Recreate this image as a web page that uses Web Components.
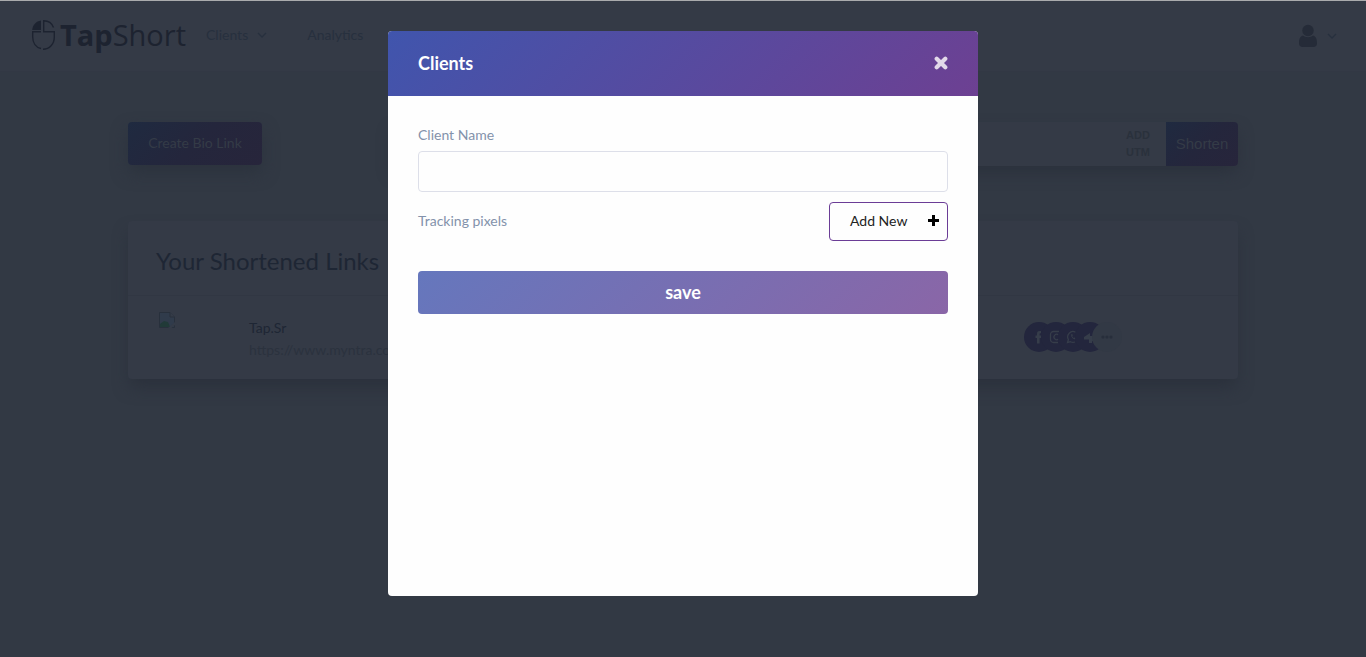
<!DOCTYPE html>
<html lang="en">
<head>
<meta charset="utf-8">
<title>TapShort</title>
<style>
  html { height: 100%; background: #323944; }
  body { margin: 0; min-height: 100%; font-family: Lato, "Liberation Sans", sans-serif; font-size: 14px; line-height: 20px; }
</style>
</head>
<body>
<tap-app></tap-app>

<script>
const define = (name, html, setup) => {
  const template = document.createElement('template');
  template.innerHTML = `<style>*{box-sizing:border-box} a{color:inherit;text-decoration:none} button,input{font:inherit;margin:0} button{cursor:pointer}</style>${html}`;
  customElements.define(name, class extends HTMLElement {
    constructor() {
      super();
      this.attachShadow({ mode: 'open' }).append(template.content.cloneNode(true));
      if (setup) setup(this, this.shadowRoot);
    }
  });
};

define('tap-chevron', `
<style>
  :host { display: block; width: 10px; height: 10px; }
  svg { display: block; }
</style>
<svg width="10" height="10" viewBox="0 0 10 10" fill="none" stroke="currentColor" stroke-width="1.3"><path d="M1 3l4 4 4-4"/></svg>`);

define('tap-logo', `
<style>
  :host { display: block; color: #1d2330; }
  a { display: flex; align-items: center; gap: 4px; font: 29px/40px "Open Sans", "Noto Sans", sans-serif; }
  svg { display: block; flex: none; }
  b { font-weight: 700; }
</style>
<a href="#"><svg width="25" height="32" viewBox="0 0 25 32" fill="none" stroke="currentColor" stroke-width="1.4">
  <path d="M10 1.500V11H1.200C1.600 6 5 2.300 10 1.500Z" fill="currentColor" stroke="none"/>
  <path d="M22.500 8.500C21 4.300 17 1.700 12.700 1.700V12.700H23.300V18C23.300 25 18.500 30.300 12 30.300M10 29.500C5 28.500 1.700 24 1.700 18V12.700H10"/>
</svg><span><b>Tap</b>Short</span></a>`);

define('tap-header', `
<style>
  :host { display: block; border-top: 1px solid #aaabad; }
  header { display: flex; align-items: center; height: 71px; padding: 0 29px 2px 31px; background: #343a46; border-bottom: 1px solid #323844; color: #27303e; }
  nav { display: flex; gap: 40px; margin-left: 20px; }
  nav a { display: flex; align-items: center; gap: 9px; }
  button { display: flex; align-items: center; gap: 9px; margin-left: auto; padding: 2px 0 0; border: 0; background: none; color: #27303e; }
</style>
<header>
  <tap-logo></tap-logo>
  <nav><a href="#">Clients <tap-chevron></tap-chevron></a><a href="#">Analytics</a></nav>
  <button aria-label="Account">
    <svg width="20" height="24" viewBox="0 0 20 24" fill="#252b38"><circle cx="10" cy="6.500" r="5.700"/><path d="M5 11.500C1.500 12.500 1 16 1 19.500 1 21.500 2.500 23 4.500 23h11c2 0 3.500-1.500 3.500-3.500 0-3.500-.5-7-4-8-2.500 2.300-7.500 2.300-10 0z"/></svg>
    <tap-chevron></tap-chevron>
  </button>
</header>`);

define('tap-toolbar', `
<style>
  :host { display: flex; align-items: flex-start; gap: 130px; }
  button { border: 0; background: linear-gradient(135deg, #1f2a40, #24263c 50%, #27253b); color: #343b47; }
  .bio { width: 134px; height: 43px; border-radius: 4px; box-shadow: 0 8px 16px #2c333e; white-space: nowrap; padding: 0 0 2px; }
  .shell { flex: 1; border-radius: 4px; box-shadow: 0 8px 16px -2px #2b313c; display: flex; }
  form { display: flex; flex: 1; height: 44px; border-radius: 4px; overflow: hidden; background: #343a46; }
  input { flex: 1; min-width: 0; border: 0; background: none; color: #27303e; outline: 0; }
  a { width: 28px; margin-right: 12px; align-self: center; color: #2a313c; font: bold 11px/17px "Liberation Sans", Arial, sans-serif; }
  .go { width: 72px; padding: 0; font: 15px/20px "Liberation Sans", Arial, sans-serif; }
</style>
<button class="bio">Create Bio Link</button>
<div class="shell"><form>
  <input aria-label="Link to shorten" type="url">
  <a href="#">ADD UTM</a>
  <button class="go" type="button">Shorten</button>
</form></div>`);

define('tap-social', `
<style>
  :host { display: flex; }
  a { display: flex; align-items: center; justify-content: center; width: 30px; height: 30px; border-radius: 50%; background: #23263d; color: #363d4a; }
  a + a { margin-left: -13px; }
  .more { background: #323945; color: #272e3b; }
</style>
<a href="#" aria-label="Facebook"><svg width="14" height="14" viewBox="0 0 14 14" fill="currentColor"><path d="M9 1H7.500C5.500 1 5 2.300 5 4v1.500H3.500V8H5v5.500h2.600V8h1.700l.3-2.500h-2V4.200c0-.7.300-1 1-1H9z"/></svg></a>
<a href="#" aria-label="Instagram"><svg width="14" height="14" viewBox="0 0 14 14" fill="none" stroke="currentColor" stroke-width="1.300"><path d="M10 1.500H4.500a3 3 0 0 0-3 3v5a3 3 0 0 0 3 3H9M9.500 5A2.700 2.700 0 1 0 9.500 9"/></svg></a>
<a href="#" aria-label="WhatsApp"><svg width="14" height="14" viewBox="0 0 14 14" fill="none" stroke="currentColor" stroke-width="1.300"><path d="M9.500 2.200A5.300 5.300 0 0 0 2.400 9.500l-.9 3 3-.8c1.500.9 3 .9 4.500.3"/><path d="M5 4.500c0 3 2 4.800 4.500 5l.6-1.200-1.600-.9-.7.600C7 7.500 6.500 7 6.200 6.200l.6-.7L6.200 4z" fill="currentColor" stroke="none"/></svg></a>
<a href="#" aria-label="Share"><svg width="14" height="14" viewBox="0 0 14 14" fill="currentColor"><path d="M1 7l6-4v3h5v5H9v2H6v-3.500H1z"/></svg></a>
<a class="more" href="#" aria-label="More"><svg width="12" height="4" viewBox="0 0 12 4" fill="currentColor"><circle cx="2" cy="2" r="1.600"/><circle cx="6" cy="2" r="1.600"/><circle cx="10" cy="2" r="1.600"/></svg></a>`);

define('tap-links', `
<style>
  :host { display: block; background: #343a46; border-radius: 4px; box-shadow: 0 10px 16px -2px #2b313c; }
  h2 { margin: 0; padding: 25px 28px 19px; border-bottom: 1px solid #313743; color: #1e2634; font-size: 24px; line-height: 30px; font-weight: 400; }
  .row { display: flex; align-items: flex-start; height: 83px; padding: 16px 116px 0 31px; }
  .thumb { display: block; width: 90px; flex: none; }
  .text { flex: 1; display: flex; flex-direction: column; gap: 2px; padding-top: 6px; }
  .name { color: #1e2634; }
  .url { color: #2b323e; }
  tap-social { margin-top: 10px; }
</style>
<h2>Your Shortened Links</h2>
<div class="row">
  <span class="thumb"><svg width="16" height="16" viewBox="0 0 16 16"><path d="M.5.500h10.500l4.500 4.500v10.500H.500z" fill="#303b4b" stroke="#28303c"/><path d="M1 15v-3l4-3 4 1 2 5z" fill="#213a38"/><path d="M9 16l7-6v3l-3.500 3zM11 0v5h5z" fill="#343b47"/><path d="M11 .5V5h4.500" fill="none" stroke="#28303c"/></svg></span>
  <div class="text"><a class="name" href="#">Tap.Sr</a><a class="url" href="#">https://www.myntra.com</a></div>
  <tap-social></tap-social>
</div>`);

define('tap-modal', `
<style>
  :host { position: fixed; inset: 0; display: flex; justify-content: center; align-items: flex-start; padding: 31px 16px; overflow: auto; }
  dialog { position: static; display: block; width: 100%; max-width: 590px; margin: 0; padding: 0; border: 0; border-radius: 4px; background: #fefefe; overflow: hidden; }
  header { display: flex; align-items: center; justify-content: space-between; height: 65px; padding: 0 30px 2px; color: #fff; background: linear-gradient(135deg, #4055ad, #6d4092); }
  h1 { margin: 0; font-size: 18px; line-height: 24px; font-weight: 700; }
  .close { padding: 0; border: 0; background: none; color: #e2d9e9; }
  svg { display: block; }
  .body { min-height: 500px; padding: 30px; }
</style>
<dialog open aria-labelledby="title">
  <header><h1 id="title"><slot name="title"></slot></h1>
    <button class="close" aria-label="Close"><svg width="14" height="14" viewBox="0 0 14 14" stroke="currentColor" stroke-width="4.200" stroke-linecap="round"><path d="M2.700 2.700l8.600 8.600M11.300 2.700l-8.600 8.600"/></svg></button>
  </header>
  <div class="body"><slot></slot></div>
</dialog>`);

define('tap-client-form', `
<style>
  :host { display: block; color: #8392ab; }
  label { display: block; margin-bottom: 7px; line-height: 18px; }
  input { display: block; width: 100%; height: 41px; padding: 0 12px; border: 1px solid #dddfe9; border-radius: 4px; background: #fefefe; }
  .pixels { display: flex; align-items: center; justify-content: space-between; margin: 10px 0 30px; }
  .pixels span { padding-bottom: 2px; }
  .add { display: flex; align-items: center; justify-content: space-between; width: 119px; height: 39px; padding: 0 8px 2px 20px; border: 1px solid #6b3d96; border-radius: 4px; background: #fefefe; color: #222; }
  .save { display: block; width: 100%; height: 43px; padding: 0 0 2px; border: 0; border-radius: 4px; background: linear-gradient(135deg, #6577bd, #8a66a7); color: #fff; font-size: 18px; font-weight: 700; }
</style>
<form>
  <label for="name">Client Name</label>
  <input id="name" type="text">
  <div class="pixels"><span>Tracking pixels</span>
    <button class="add" type="button">Add New <svg width="11" height="11" viewBox="0 0 11 11" fill="#000"><path d="M4 0h3v4h4v3H7v4H4V7H0V4h4z"/></svg></button></div>
  <button class="save" type="button">save</button>
</form>`);

define('tap-app', `
<style>
  :host { display: block; }
  main { display: flex; flex-direction: column; gap: 55px; max-width: 1142px; margin: 0 auto; padding: 50px 16px; }
</style>
<tap-header></tap-header>
<main><tap-toolbar></tap-toolbar><tap-links></tap-links></main>
<tap-modal><span slot="title">Clients</span><tap-client-form></tap-client-form></tap-modal>`);
</script>
</body>
</html>
